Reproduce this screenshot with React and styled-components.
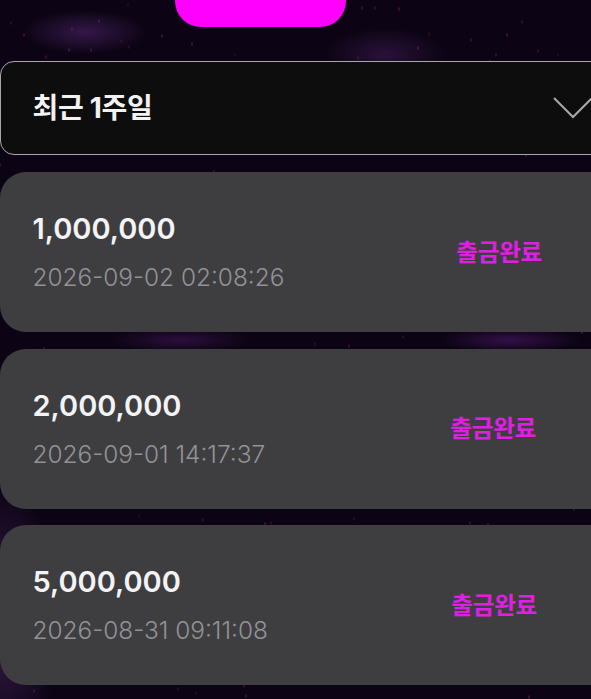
import React from "react";
import styled, { createGlobalStyle } from "styled-components";

// speckled nebula backdrop, same dots every render
const speckles = (() => {
  let seed = 17;
  const next = () => {
    seed = (seed * 16807) % 2147483647;
    return seed / 2147483647;
  };
  const dots = [];
  for (let i = 0; i < 260; i++) {
    const x = Math.round(next() * 591);
    const y = Math.round(next() * 699);
    const alpha = (0.2 + next() * 0.35).toFixed(2);
    dots.push(`radial-gradient(ellipse 1.5px 2.5px at ${x}px ${y}px, rgba(165,45,115,${alpha}), transparent)`);
  }
  return dots.join(",");
})();

const GlobalStyle = createGlobalStyle`
  html, body {
    margin: 0;
    padding: 0;
    background: #0c0414;
  }
`;

const Page = styled.div`
  width: 591px;
  height: 699px;
  overflow: hidden;
  font-family: Inter, "Noto Sans CJK KR", sans-serif;
  background-color: #0c0414;
  background-image: ${speckles},
    radial-gradient(ellipse 62px 22px at 85px 32px, rgba(85, 40, 115, 0.55), transparent),
    radial-gradient(ellipse 60px 26px at 385px 54px, rgba(70, 30, 95, 0.5), transparent),
    radial-gradient(ellipse 70px 12px at 180px 340px, rgba(75, 25, 100, 0.5), transparent),
    radial-gradient(ellipse 70px 12px at 510px 340px, rgba(85, 25, 115, 0.55), transparent),
    radial-gradient(ellipse 60px 140px at 0px 620px, rgba(85, 45, 115, 0.55), transparent);
`;

const TopButton = styled.div`
  width: 171px;
  height: 27px;
  margin: 0 auto 34px;
  transform: translateX(-35px);
  background: #ff00ff;
  border-radius: 0 0 26px 26px;
`;

const Select = styled.div`
  box-sizing: border-box;
  width: 620px;
  height: 94px;
  margin-bottom: 17px;
  padding: 0 26px 0 31.5px;
  display: flex;
  align-items: center;
  justify-content: space-between;
  background: #0d0d0e;
  border: 1.5px solid #a9a7ab;
  border-radius: 14px;
`;

const SelectLabel = styled.span`
  margin-bottom: 5px;
  color: #f2f2f2;
  font-size: 28px;
  font-weight: 700;
  letter-spacing: -0.3px;
`;

const Chevron = styled.svg`
  display: block;
  width: 40px;
  height: 24px;
`;

const List = styled.div`
  display: flex;
  flex-direction: column;
  gap: 16.5px;
`;

const Card = styled.div`
  box-sizing: border-box;
  width: 591px;
  height: 160px;
  padding: 0 ${(p) => p.$statusInset}px 0 32.5px;
  display: flex;
  align-items: center;
  justify-content: space-between;
  background: #3e3e41;
  border-radius: 26px 0 0 26px;
`;

const Details = styled.div`
  display: flex;
  flex-direction: column;
  gap: 17px;
`;

const Amount = styled.div`
  color: #f3f3f5;
  font-size: 29px;
  line-height: 34px;
  font-weight: 600;
`;

const DateText = styled.div`
  color: #929297;
  font-size: 24.4px;
  line-height: 29px;
  font-weight: 300;
`;

const Status = styled.div`
  margin-bottom: 3px;
  color: #e01ee6;
  font-size: 23.5px;
  font-weight: 700;
  letter-spacing: -0.2px;
  white-space: nowrap;
`;

const withdrawals = [
  { amount: "1,000,000", date: "2026-09-02 02:08:26", inset: 49 },
  { amount: "2,000,000", date: "2026-09-01 14:17:37", inset: 55 },
  { amount: "5,000,000", date: "2026-08-31 09:11:08", inset: 54 },
];

const App = () => (
  <Page>
    <GlobalStyle />
    <TopButton />
    <Select>
      <SelectLabel>최근 1주일</SelectLabel>
      <Chevron viewBox="0 0 40 24" fill="none">
        <path d="M1 2 L20 21 L39 2" stroke="#a8a8a8" strokeWidth="2" />
      </Chevron>
    </Select>
    <List>
      {withdrawals.map((row) => (
        <Card key={row.date} $statusInset={row.inset}>
          <Details>
            <Amount>{row.amount}</Amount>
            <DateText>{row.date}</DateText>
          </Details>
          <Status>출금완료</Status>
        </Card>
      ))}
    </List>
  </Page>
);

export default App;
